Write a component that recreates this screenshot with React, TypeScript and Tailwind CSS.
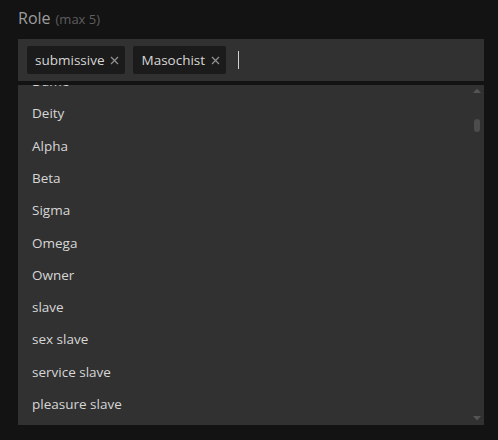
const roles = [
  'Dame',
  'Deity',
  'Alpha',
  'Beta',
  'Sigma',
  'Omega',
  'Owner',
  'slave',
  'sex slave',
  'service slave',
  'pleasure slave',
];

function Tag({ label }: { label: string }) {
  return (
    <div className="flex h-7 items-center gap-[6px] rounded-[2px] bg-[#1b1b1b] pl-2 pr-[6px] text-[13.5px] text-[#d6d6d6]">
      <span>{label}</span>
      <svg width="9" height="9" viewBox="0 0 9 9">
        <path d="M1 1 L8 8 M8 1 L1 8" stroke="#8f8f8f" strokeWidth="1.3" />
      </svg>
    </div>
  );
}

export default function App() {
  return (
    <div
      className="h-[440px] w-[498px] bg-[#131313] pl-[18px] pr-[14px] pt-[6px]"
      style={{ fontFamily: '"Open Sans", "Noto Sans", sans-serif' }}
    >
      <div className="flex items-baseline gap-[5px] leading-6">
        <span className="text-[16px] text-[#9d9d9d]">Role</span>
        <span className="text-[13px] text-[#5e5e5e]">(max 5)</span>
      </div>

      <div className="mt-[8px] flex h-[42px] items-center gap-2 bg-[#313131] px-[9px]">
        <Tag label="submissive" />
        <Tag label="Masochist" />
        <div className="ml-[4px] h-[18px] w-px bg-[#d0d0d0]" />
      </div>

      <div className="mt-[4px] flex h-[340px] bg-[#313131]">
        <div className="flex-1 overflow-hidden">
          <ul className="-mt-[20px]">
            {roles.map((r) => (
              <li
                key={r}
                className="flex h-[32.3px] items-center pl-[14px] text-[13.5px] text-[#d6d6d6]"
              >
                {r}
              </li>
            ))}
          </ul>
        </div>
        <div className="flex w-[12px] flex-col items-center pb-[4px] pt-[3px] pr-[2px]">
          <svg width="8" height="5" viewBox="0 0 8 5">
            <path d="M0 5 L4 0.5 L8 5 Z" fill="#545454" />
          </svg>
          <div className="mt-[26px] h-[13px] w-[6px] rounded-[3px] bg-[#4c4c4c]" />
          <div className="flex-1" />
          <svg width="8" height="5" viewBox="0 0 8 5">
            <path d="M0 0 L8 0 L4 4.5 Z" fill="#545454" />
          </svg>
        </div>
      </div>
    </div>
  );
}
